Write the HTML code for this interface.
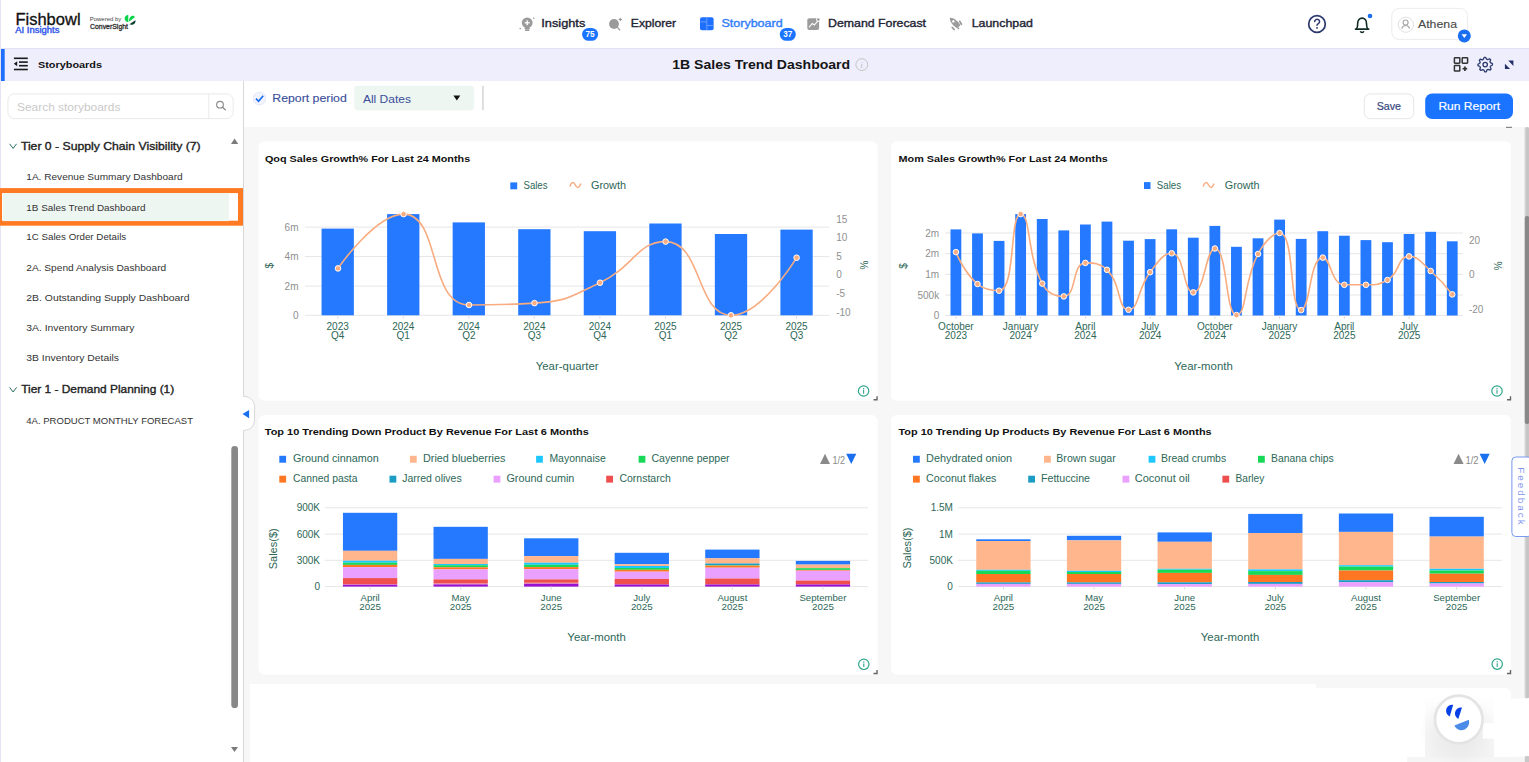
<!DOCTYPE html>
<html><head><meta charset="utf-8"><title>1B Sales Trend Dashboard</title>
<style>html,body{margin:0;padding:0;width:1529px;height:762px;overflow:hidden;background:#fff;font-family:"Liberation Sans",sans-serif}</style>
</head><body>
<svg width="1529" height="762" viewBox="0 0 1529 762" style="position:absolute;left:0;top:0;font-family:'Liberation Sans',sans-serif">
<rect x="0.00" y="0.00" width="1529.00" height="762.00" fill="#ffffff" rx="0"/>
<rect x="244.00" y="127.00" width="1285.00" height="635.00" fill="#f7f7f7" rx="0"/>
<rect x="0.00" y="0.00" width="1.00" height="762.00" fill="#e4e4f4" rx="0"/>
<rect x="0.00" y="48.00" width="1529.00" height="1.00" fill="#e2e2f6" rx="0"/>
<rect x="1.00" y="49.00" width="1528.00" height="32.00" fill="#eeeefc" rx="0"/>
<rect x="1.00" y="49.00" width="3.70" height="32.00" fill="#1f6fff" rx="0"/>
<rect x="243.00" y="81.00" width="1.00" height="681.00" fill="#d8d8d8" rx="0"/>
<text x="15.40" y="24.60" font-size="15.8" fill="#111111" color="#111111" textLength="65.20" lengthAdjust="spacingAndGlyphs" stroke="currentColor" stroke-width="0.3">Fishbowl</text>
<text x="15.30" y="32.60" font-size="8.9" fill="#3357ea" color="#3357ea" textLength="44.10" lengthAdjust="spacingAndGlyphs" stroke="currentColor" stroke-width="0.4">AI Insights</text>
<text x="89.70" y="20.80" font-size="5.6" fill="#444444" color="#444444" textLength="31.60" lengthAdjust="spacingAndGlyphs">Powered by</text>
<text x="90.00" y="29.10" font-size="7.6" fill="#333333" color="#333333" textLength="38.00" lengthAdjust="spacingAndGlyphs" stroke="currentColor" stroke-width="0.35">ConverSight</text>
<path d="M128.3,15.1 C123.4,15.2 123.4,22.1 128.3,22.3 Z" fill="#08d34a"/>
<path d="M128.9,21.7 L134.9,17.2 C133.6,14.6 129,15.6 128.9,21.7 Z" fill="#08d34a"/>
<path d="M129.4,24.3 L135.3,20.2 C136.4,23.6 132.4,25.8 129.4,24.3 Z" fill="#063f30"/>
<g fill="#9a9a9a"><circle cx="527.2" cy="22.8" r="5.4"/><rect x="524.6" y="27.2" width="5.2" height="2.6" rx="1"/><rect x="525" y="30" width="4.4" height="1" rx="0.5"/></g>
<g stroke="#fff" stroke-width="1.3"><line x1="527.2" y1="20.3" x2="527.2" y2="25.3"/><line x1="524.7" y1="22.8" x2="529.7" y2="22.8"/></g>
<g fill="#9a9a9a"><circle cx="533.8" cy="18.2" r="0.8"/><circle cx="520.2" cy="28.6" r="0.8"/></g>
<text x="541.30" y="27.10" font-size="10.6" fill="#1e2433" color="#1e2433" textLength="44.00" lengthAdjust="spacingAndGlyphs" stroke="currentColor" stroke-width="0.35">Insights</text>
<rect x="582.10" y="27.90" width="16.00" height="12.90" fill="#1a74ff" rx="6.45"/>
<text x="590.10" y="37.10" font-size="8.2" fill="#ffffff" color="#ffffff" font-weight="bold" text-anchor="middle">75</text>
<circle cx="614" cy="24" r="4.95" fill="#9a9a9a"/><line x1="617.4" y1="27.4" x2="619.7" y2="29.7" stroke="#9a9a9a" stroke-width="1.3" stroke-linecap="round"/>
<path d="M620.3,17.2 Q620.6,19.1 622.5,19.4 Q620.6,19.7 620.3,21.6 Q620,19.7 618.1,19.4 Q620,19.1 620.3,17.2 Z" fill="#9a9a9a"/>
<text x="630.80" y="27.10" font-size="10.6" fill="#1e2433" color="#1e2433" textLength="45.20" lengthAdjust="spacingAndGlyphs" stroke="currentColor" stroke-width="0.35">Explorer</text>
<rect x="700.00" y="17.30" width="13.60" height="13.00" fill="#1f6fff" rx="2"/>
<g stroke="#7fb0ff" stroke-width="0.7"><line x1="706.8" y1="17.5" x2="706.8" y2="30"/><line x1="700.2" y1="21.9" x2="706.8" y2="21.9"/><line x1="706.8" y1="25.5" x2="713.4" y2="25.5"/></g>
<text x="721.50" y="27.10" font-size="10.6" fill="#2f7cfa" color="#2f7cfa" textLength="61.10" lengthAdjust="spacingAndGlyphs" stroke="currentColor" stroke-width="0.35">Storyboard</text>
<rect x="779.80" y="27.90" width="16.00" height="12.90" fill="#1a74ff" rx="6.45"/>
<text x="787.80" y="37.10" font-size="8.2" fill="#ffffff" color="#ffffff" font-weight="bold" text-anchor="middle">37</text>
<rect x="807.30" y="18.30" width="11.80" height="11.70" fill="#9c9c9c" rx="2"/>
<polyline points="809.3,26.8 812.3,23.4 814.3,25 817.6,21.4" fill="none" stroke="#fff" stroke-width="1.1" stroke-linecap="round"/><circle cx="818.3" cy="19.5" r="2.3" fill="#fff"/><circle cx="818.3" cy="19.5" r="1.35" fill="#9c9c9c"/>
<text x="828.00" y="26.90" font-size="10.6" fill="#1e2433" color="#1e2433" textLength="98.00" lengthAdjust="spacingAndGlyphs" stroke="currentColor" stroke-width="0.35">Demand Forecast</text>
<g transform="translate(954.8,22.8) rotate(45)"><path d="M-7,0 C-4.5,-3.3 2.5,-3.3 5.6,-2.3 L5.6,2.3 C2.5,3.3 -4.5,3.3 -7,0 Z" fill="#9c9c9c"/><circle cx="-2" cy="0" r="1.3" fill="#fff"/></g>
<g stroke="#9c9c9c" stroke-width="1.8" stroke-linecap="round"><line x1="959.8" y1="21.4" x2="961.4" y2="24.2"/><line x1="952.3" y1="27.5" x2="954.1" y2="29.5"/></g><circle cx="958.5" cy="28.4" r="0.85" fill="#9c9c9c"/>
<text x="971.70" y="26.90" font-size="10.6" fill="#1e2433" color="#1e2433" textLength="61.30" lengthAdjust="spacingAndGlyphs" stroke="currentColor" stroke-width="0.35">Launchpad</text>
<circle cx="1317" cy="24" r="8.3" fill="none" stroke="#2d3a6e" stroke-width="1.75"/>
<path d="M1314.7,21.6 A2.45,2.3 0 1 1 1318.4,23.6 C1317.5,24.1 1317,24.5 1317,25.3" fill="none" stroke="#2d3a6e" stroke-width="1.5" stroke-linecap="round"/><rect x="1316.2" y="27.1" width="1.6" height="1.6" fill="#2d3a6e"/>
<path d="M1356.4,29 C1357.6,27.6 1357.7,26 1357.7,23.4 C1357.7,20.2 1359.6,18.1 1362.1,18.1 C1364.6,18.1 1366.5,20.2 1366.5,23.4 C1366.5,26 1366.6,27.6 1367.8,29" fill="none" stroke="#102a24" stroke-width="1.6"/><line x1="1355.5" y1="29.1" x2="1368.7" y2="29.1" stroke="#102a24" stroke-width="1.7" stroke-linecap="round"/><path d="M1360.4,31.2 A1.75,1.6 0 0 0 1363.8,31.2" fill="none" stroke="#102a24" stroke-width="1.5"/>
<circle cx="1370" cy="16" r="2.3" fill="#1a6ff0"/>
<rect x="1391.8" y="8.4" width="75.6" height="31" rx="7" fill="#fff" stroke="#ececec" stroke-width="1"/>
<circle cx="1405.9" cy="24.7" r="7.6" fill="#fff" stroke="#dddddd" stroke-width="0.9"/>
<circle cx="1405.6" cy="22.5" r="2.5" fill="none" stroke="#a8a8a8" stroke-width="1.2"/><path d="M1401.8,28.6 A4,4 0 0 1 1409.6,28.6" fill="none" stroke="#a8a8a8" stroke-width="1.2"/>
<text x="1418.00" y="27.90" font-size="10" fill="#4a4a4a" color="#4a4a4a" textLength="38.99" lengthAdjust="spacingAndGlyphs" stroke="currentColor" stroke-width="0.12">Athena</text>
<circle cx="1464.3" cy="35.9" r="6.5" fill="#1a6ff0"/><path d="M1461.6,34.3 L1467,34.3 L1464.3,37.9 Z" fill="#fff"/>
<g stroke="#1a1a1a" stroke-width="1.6"><line x1="13.9" y1="58.3" x2="27.8" y2="58.3"/><line x1="19" y1="62.1" x2="27.8" y2="62.1"/><line x1="19" y1="65.7" x2="27.8" y2="65.7"/><line x1="13.9" y1="69.5" x2="27.8" y2="69.5"/></g><path d="M13.8,63.8 L17.2,61.3 L17.2,66.3 Z" fill="#1a1a1a"/>
<text x="38.00" y="68.00" font-size="9.3" fill="#111111" color="#111111" font-weight="bold" textLength="64.00" lengthAdjust="spacingAndGlyphs">Storyboards</text>
<text x="672.20" y="68.70" font-size="12.4" fill="#151515" color="#151515" font-weight="bold" textLength="178.00" lengthAdjust="spacingAndGlyphs">1B Sales Trend Dashboard</text>
<circle cx="861.8" cy="64.6" r="5.9" fill="none" stroke="#c4c4c4" stroke-width="1"/><text x="861.6" y="67.8" font-size="8" fill="#b8b8b8" text-anchor="middle" font-style="italic" font-family="Liberation Serif">i</text>
<g fill="none" stroke="#333" stroke-width="1.5"><rect x="1454.4" y="57.8" width="5.4" height="5.4" rx="0.6"/><rect x="1462.2" y="57.8" width="5.4" height="5.4" rx="0.6"/><rect x="1454.4" y="65.6" width="5.4" height="5.4" rx="0.6"/></g><g stroke="#333" stroke-width="1.7" stroke-linecap="butt"><line x1="1464.9" y1="66.4" x2="1464.9" y2="71"/><line x1="1462.6" y1="68.7" x2="1467.2" y2="68.7"/></g>
<polygon points="1492.42,63.53 1492.49,64.96 1490.63,65.96 1490.26,66.99 1491.06,68.95 1490.10,70.01 1488.08,69.40 1487.09,69.87 1486.27,71.82 1484.84,71.89 1483.84,70.03 1482.81,69.66 1480.85,70.46 1479.79,69.50 1480.40,67.48 1479.93,66.49 1477.98,65.67 1477.91,64.24 1479.77,63.24 1480.14,62.21 1479.34,60.25 1480.30,59.19 1482.32,59.80 1483.31,59.33 1484.13,57.38 1485.56,57.31 1486.56,59.17 1487.59,59.54 1489.55,58.74 1490.61,59.70 1490.00,61.72 1490.47,62.71" fill="none" stroke="#2d3a6e" stroke-width="1.3" stroke-linejoin="round"/><circle cx="1485.2" cy="64.6" r="2.2" fill="none" stroke="#2d3a6e" stroke-width="1.3"/>
<path d="M1513.4,60.6 L1508.3,60.6 L1513.4,65.9 Z M1504.9,69.1 L1510.1,69.1 L1504.9,63.7 Z" fill="#24306a"/>
<rect x="7.9" y="93.9" width="225.3" height="24.7" rx="6.5" fill="#fff" stroke="#e6e6e6" stroke-width="0.9"/>
<rect x="208.40" y="94.20" width="0.90" height="24.10" fill="#e6e6e6" rx="0"/>
<circle cx="220" cy="104.7" r="3.35" fill="none" stroke="#8c8c8c" stroke-width="1.15"/><line x1="222.5" y1="107.2" x2="225.3" y2="109.8" stroke="#8c8c8c" stroke-width="1.3" stroke-linecap="round"/>
<text x="17.00" y="110.70" font-size="11.3" fill="#c9c9c9" color="#c9c9c9" textLength="103.40" lengthAdjust="spacingAndGlyphs">Search storyboards</text>
<polyline points="9.6,143.8 13.1,148.4 16.6,143.8" fill="none" stroke="#2f6a5c" stroke-width="1"/>
<text x="20.90" y="149.60" font-size="11" fill="#222222" color="#222222" textLength="179.80" lengthAdjust="spacingAndGlyphs" stroke="currentColor" stroke-width="0.35">Tier 0 - Supply Chain Visibility (7)</text>
<path d="M231,144 L238.2,144 L234.6,138.4 Z" fill="#7a7a7a"/>
<rect x="-0.5" y="190.6" width="241" height="32.6" fill="#ffffff" stroke="#ff7a22" stroke-width="5"/>
<rect x="2.90" y="193.10" width="226.00" height="28.00" fill="#eef6f2" rx="0"/>
<text x="26.30" y="180.10" font-size="9.9" fill="#333333" color="#333333" textLength="156.30" lengthAdjust="spacingAndGlyphs">1A. Revenue Summary Dashboard</text>
<text x="26.30" y="210.50" font-size="9.9" fill="#333333" color="#333333" textLength="119.20" lengthAdjust="spacingAndGlyphs">1B Sales Trend Dashboard</text>
<text x="26.30" y="240.20" font-size="9.9" fill="#333333" color="#333333" textLength="99.90" lengthAdjust="spacingAndGlyphs">1C Sales Order Details</text>
<text x="26.30" y="270.50" font-size="9.9" fill="#333333" color="#333333" textLength="139.90" lengthAdjust="spacingAndGlyphs">2A. Spend Analysis Dashboard</text>
<text x="26.30" y="300.80" font-size="9.9" fill="#333333" color="#333333" textLength="163.30" lengthAdjust="spacingAndGlyphs">2B. Outstanding Supply Dashboard</text>
<text x="26.30" y="331.00" font-size="9.9" fill="#333333" color="#333333" textLength="108.20" lengthAdjust="spacingAndGlyphs">3A. Inventory Summary</text>
<text x="26.30" y="360.80" font-size="9.9" fill="#333333" color="#333333" textLength="92.70" lengthAdjust="spacingAndGlyphs">3B Inventory Details</text>
<polyline points="9.6,387.4 13.1,392 16.6,387.4" fill="none" stroke="#2f6a5c" stroke-width="1"/>
<text x="21.20" y="393.30" font-size="11" fill="#222222" color="#222222" textLength="152.99" lengthAdjust="spacingAndGlyphs" stroke="currentColor" stroke-width="0.35">Tier 1 - Demand Planning (1)</text>
<text x="26.30" y="424.00" font-size="9.9" fill="#333333" color="#333333" textLength="166.70" lengthAdjust="spacingAndGlyphs">4A. PRODUCT MONTHLY FORECAST</text>
<rect x="231.30" y="446.10" width="6.70" height="262.00" fill="#888888" rx="3.35"/>
<path d="M231,747 L238,747 L234.5,752 Z" fill="#7a7a7a"/>
<rect x="253.4" y="92.4" width="12.2" height="12.3" rx="5.5" fill="#f2f3fd" stroke="#e2e5f8" stroke-width="0.9"/><polyline points="256,98.6 258.6,101.3 263.2,95.8" fill="none" stroke="#1a6ff0" stroke-width="1.7"/>
<text x="272.30" y="101.70" font-size="11" fill="#3b4f9a" color="#3b4f9a" textLength="74.50" lengthAdjust="spacingAndGlyphs" stroke="currentColor" stroke-width="0.12">Report period</text>
<rect x="354.20" y="85.80" width="120.00" height="24.80" fill="#eef6f2" rx="4"/>
<text x="362.90" y="102.60" font-size="11" fill="#3b4f9a" color="#3b4f9a" textLength="48.01" lengthAdjust="spacingAndGlyphs">All Dates</text>
<path d="M453.4,95.4 L460.3,95.4 L456.85,100.6 Z" fill="#111"/>
<rect x="482.30" y="85.80" width="1.30" height="24.30" fill="#cfcfcf" rx="0"/>
<rect x="1364.3" y="93.9" width="49.4" height="24.8" rx="6" fill="#fff" stroke="#e3e3e3" stroke-width="0.9"/>
<text x="1376.70" y="110.10" font-size="10" fill="#3a4a82" color="#3a4a82" textLength="24.30" lengthAdjust="spacingAndGlyphs" stroke="currentColor" stroke-width="0.2">Save</text>
<rect x="1425.20" y="93.50" width="87.80" height="25.50" fill="#1a74ff" rx="7"/>
<text x="1438.40" y="110.10" font-size="10" fill="#ffffff" color="#ffffff" textLength="61.60" lengthAdjust="spacingAndGlyphs" stroke="currentColor" stroke-width="0.15">Run Report</text>
<rect x="258.50" y="141.30" width="619.10" height="259.50" fill="#ffffff" rx="6"/>
<rect x="890.90" y="141.30" width="620.10" height="259.50" fill="#ffffff" rx="6"/>
<rect x="258.50" y="415.00" width="619.10" height="259.50" fill="#ffffff" rx="6"/>
<rect x="890.90" y="415.00" width="620.10" height="259.50" fill="#ffffff" rx="6"/>
<rect x="250.00" y="684.00" width="1066.00" height="78.00" fill="#ffffff" rx="0"/>
<rect x="258.50" y="688.00" width="1252.50" height="112.00" fill="#ffffff" rx="6"/>
<rect x="1506.00" y="126.80" width="6.00" height="1.10" fill="#7a7a7a" rx="0"/>
<path d="M873.5,399.8 L877,399.8 L877,396.3" fill="none" stroke="#666" stroke-width="1.4"/>
<path d="M1507.0,399.8 L1510.5,399.8 L1510.5,396.3" fill="none" stroke="#666" stroke-width="1.4"/>
<path d="M873.5,673.5 L877,673.5 L877,670.0" fill="none" stroke="#666" stroke-width="1.4"/>
<path d="M1507.0,673.5 L1510.5,673.5 L1510.5,670.0" fill="none" stroke="#666" stroke-width="1.4"/>
<circle cx="863.6" cy="391" r="5.2" fill="none" stroke="#2ea58b" stroke-width="1.2"/><circle cx="863.6" cy="388.7" r="0.7" fill="#2ea58b"/><line x1="863.6" y1="390.1" x2="863.6" y2="393.8" stroke="#2ea58b" stroke-width="1.1"/>
<circle cx="1497" cy="391" r="5.2" fill="none" stroke="#2ea58b" stroke-width="1.2"/><circle cx="1497" cy="388.7" r="0.7" fill="#2ea58b"/><line x1="1497" y1="390.1" x2="1497" y2="393.8" stroke="#2ea58b" stroke-width="1.1"/>
<circle cx="863.8" cy="664.3" r="5.2" fill="none" stroke="#2ea58b" stroke-width="1.2"/><circle cx="863.8" cy="662.0" r="0.7" fill="#2ea58b"/><line x1="863.8" y1="663.4" x2="863.8" y2="667.0999999999999" stroke="#2ea58b" stroke-width="1.1"/>
<circle cx="1497.2" cy="664.1" r="5.2" fill="none" stroke="#2ea58b" stroke-width="1.2"/><circle cx="1497.2" cy="661.8000000000001" r="0.7" fill="#2ea58b"/><line x1="1497.2" y1="663.2" x2="1497.2" y2="666.9" stroke="#2ea58b" stroke-width="1.1"/>
<text x="264.90" y="161.70" font-size="9.8" fill="#111111" color="#111111" font-weight="bold" textLength="205.29" lengthAdjust="spacingAndGlyphs">Qoq Sales Growth% For Last 24 Months</text>
<rect x="510.30" y="182.40" width="6.90" height="6.90" fill="#2479ff" rx="0"/>
<text x="523.50" y="188.80" font-size="10.5" fill="#2d6757" color="#2d6757" textLength="24.00" lengthAdjust="spacingAndGlyphs">Sales</text>
<path d="M569.8,186.6 C571.5,181.5 573.6,181.5 575.3,185 C577,188.5 579,188.5 580.8,183.5" fill="none" stroke="#f8ac80" stroke-width="1.4"/>
<text x="591.00" y="188.80" font-size="10.5" fill="#2d6757" color="#2d6757" textLength="35.00" lengthAdjust="spacingAndGlyphs">Growth</text>
<rect x="304.90" y="226.60" width="524.40" height="1.00" fill="#e6e6e6" rx="0"/>
<rect x="304.90" y="256.10" width="524.40" height="1.00" fill="#e6e6e6" rx="0"/>
<rect x="304.90" y="285.60" width="524.40" height="1.00" fill="#e6e6e6" rx="0"/>
<rect x="304.90" y="314.80" width="524.40" height="1.00" fill="#e6e6e6" rx="0"/>
<text x="298.50" y="230.60" font-size="10" fill="#8f8f8f" color="#8f8f8f" text-anchor="end">6m</text>
<text x="298.50" y="260.10" font-size="10" fill="#8f8f8f" color="#8f8f8f" text-anchor="end">4m</text>
<text x="298.50" y="289.60" font-size="10" fill="#8f8f8f" color="#8f8f8f" text-anchor="end">2m</text>
<text x="298.50" y="318.80" font-size="10" fill="#8f8f8f" color="#8f8f8f" text-anchor="end">0</text>
<text transform="translate(269.70,265.70) rotate(-90)" x="0" y="0" font-size="10" fill="#2d6757" text-anchor="middle" dominant-baseline="central">$</text>
<text x="836.20" y="222.60" font-size="10" fill="#8f8f8f" color="#8f8f8f" text-anchor="start">15</text>
<text x="836.20" y="241.10" font-size="10" fill="#8f8f8f" color="#8f8f8f" text-anchor="start">10</text>
<text x="836.20" y="259.50" font-size="10" fill="#8f8f8f" color="#8f8f8f" text-anchor="start">5</text>
<text x="836.20" y="277.70" font-size="10" fill="#8f8f8f" color="#8f8f8f" text-anchor="start">0</text>
<text x="836.20" y="296.80" font-size="10" fill="#8f8f8f" color="#8f8f8f" text-anchor="start">-5</text>
<text x="836.20" y="315.50" font-size="10" fill="#8f8f8f" color="#8f8f8f" text-anchor="start">-10</text>
<text transform="translate(864.50,265.00) rotate(-90)" x="0" y="0" font-size="10" fill="#2d6757" text-anchor="middle" dominant-baseline="central">%</text>
<rect x="321.55" y="228.60" width="32.30" height="86.70" fill="#2479ff" rx="0"/>
<rect x="337.20" y="315.30" width="1.00" height="3.40" fill="#dddddd" rx="0"/>
<text x="337.70" y="329.70" font-size="10" fill="#2d6757" color="#2d6757" text-anchor="middle">2023</text>
<text x="337.70" y="338.80" font-size="10" fill="#2d6757" color="#2d6757" text-anchor="middle">Q4</text>
<rect x="387.10" y="214.10" width="32.30" height="101.20" fill="#2479ff" rx="0"/>
<rect x="402.75" y="315.30" width="1.00" height="3.40" fill="#dddddd" rx="0"/>
<text x="403.25" y="329.70" font-size="10" fill="#2d6757" color="#2d6757" text-anchor="middle">2024</text>
<text x="403.25" y="338.80" font-size="10" fill="#2d6757" color="#2d6757" text-anchor="middle">Q1</text>
<rect x="452.65" y="222.40" width="32.30" height="92.90" fill="#2479ff" rx="0"/>
<rect x="468.30" y="315.30" width="1.00" height="3.40" fill="#dddddd" rx="0"/>
<text x="468.80" y="329.70" font-size="10" fill="#2d6757" color="#2d6757" text-anchor="middle">2024</text>
<text x="468.80" y="338.80" font-size="10" fill="#2d6757" color="#2d6757" text-anchor="middle">Q2</text>
<rect x="518.20" y="229.20" width="32.30" height="86.10" fill="#2479ff" rx="0"/>
<rect x="533.85" y="315.30" width="1.00" height="3.40" fill="#dddddd" rx="0"/>
<text x="534.35" y="329.70" font-size="10" fill="#2d6757" color="#2d6757" text-anchor="middle">2024</text>
<text x="534.35" y="338.80" font-size="10" fill="#2d6757" color="#2d6757" text-anchor="middle">Q3</text>
<rect x="583.75" y="231.20" width="32.30" height="84.10" fill="#2479ff" rx="0"/>
<rect x="599.40" y="315.30" width="1.00" height="3.40" fill="#dddddd" rx="0"/>
<text x="599.90" y="329.70" font-size="10" fill="#2d6757" color="#2d6757" text-anchor="middle">2024</text>
<text x="599.90" y="338.80" font-size="10" fill="#2d6757" color="#2d6757" text-anchor="middle">Q4</text>
<rect x="649.30" y="223.50" width="32.30" height="91.80" fill="#2479ff" rx="0"/>
<rect x="664.95" y="315.30" width="1.00" height="3.40" fill="#dddddd" rx="0"/>
<text x="665.45" y="329.70" font-size="10" fill="#2d6757" color="#2d6757" text-anchor="middle">2025</text>
<text x="665.45" y="338.80" font-size="10" fill="#2d6757" color="#2d6757" text-anchor="middle">Q1</text>
<rect x="714.85" y="234.00" width="32.30" height="81.30" fill="#2479ff" rx="0"/>
<rect x="730.50" y="315.30" width="1.00" height="3.40" fill="#dddddd" rx="0"/>
<text x="731.00" y="329.70" font-size="10" fill="#2d6757" color="#2d6757" text-anchor="middle">2025</text>
<text x="731.00" y="338.80" font-size="10" fill="#2d6757" color="#2d6757" text-anchor="middle">Q2</text>
<rect x="780.40" y="229.60" width="32.30" height="85.70" fill="#2479ff" rx="0"/>
<rect x="796.05" y="315.30" width="1.00" height="3.40" fill="#dddddd" rx="0"/>
<text x="796.55" y="329.70" font-size="10" fill="#2d6757" color="#2d6757" text-anchor="middle">2025</text>
<text x="796.55" y="338.80" font-size="10" fill="#2d6757" color="#2d6757" text-anchor="middle">Q3</text>
<path d="M338.00,268.40 C338.00,268.40 375.31,214.10 403.60,214.10 C440.81,214.10 427.71,305.00 469.00,305.00 C493.16,305.00 502.50,305.00 534.50,303.10 C568.00,301.11 569.20,297.15 600.00,282.70 C634.75,266.40 636.78,241.60 665.60,241.60 C702.28,241.60 696.27,315.30 731.00,315.30 C761.77,315.30 796.60,257.70 796.60,257.70" fill="none" stroke="#f8ac80" stroke-width="1.6"/>
<circle cx="338" cy="268.4" r="2.8" fill="#f8ac80" stroke="#fff" stroke-width="1"/>
<circle cx="403.6" cy="214.1" r="2.8" fill="#f8ac80" stroke="#fff" stroke-width="1"/>
<circle cx="469" cy="305" r="2.8" fill="#f8ac80" stroke="#fff" stroke-width="1"/>
<circle cx="534.5" cy="303.1" r="2.8" fill="#f8ac80" stroke="#fff" stroke-width="1"/>
<circle cx="600" cy="282.7" r="2.8" fill="#f8ac80" stroke="#fff" stroke-width="1"/>
<circle cx="665.6" cy="241.6" r="2.8" fill="#f8ac80" stroke="#fff" stroke-width="1"/>
<circle cx="731" cy="315.3" r="2.8" fill="#f8ac80" stroke="#fff" stroke-width="1"/>
<circle cx="796.6" cy="257.7" r="2.8" fill="#f8ac80" stroke="#fff" stroke-width="1"/>
<text x="567.20" y="369.50" font-size="11.4" fill="#2d6757" color="#2d6757" text-anchor="middle">Year-quarter</text>
<text x="898.50" y="161.50" font-size="9.8" fill="#111111" color="#111111" font-weight="bold" textLength="209.30" lengthAdjust="spacingAndGlyphs">Mom Sales Growth% For Last 24 Months</text>
<rect x="1144.00" y="182.10" width="6.50" height="6.90" fill="#2479ff" rx="0"/>
<text x="1156.80" y="188.80" font-size="10.5" fill="#2d6757" color="#2d6757" textLength="24.20" lengthAdjust="spacingAndGlyphs">Sales</text>
<path d="M1203.1,186.6 C1204.8,181.5 1206.9,181.5 1208.6,185 C1210.3,188.5 1212.3,188.5 1214.1,183.5" fill="none" stroke="#f8ac80" stroke-width="1.4"/>
<text x="1224.80" y="188.80" font-size="10.5" fill="#2d6757" color="#2d6757" textLength="34.80" lengthAdjust="spacingAndGlyphs">Growth</text>
<rect x="945.10" y="232.50" width="517.90" height="1.00" fill="#e6e6e6" rx="0"/>
<rect x="945.10" y="253.20" width="517.90" height="1.00" fill="#e6e6e6" rx="0"/>
<rect x="945.10" y="273.80" width="517.90" height="1.00" fill="#e6e6e6" rx="0"/>
<rect x="945.10" y="294.50" width="517.90" height="1.00" fill="#e6e6e6" rx="0"/>
<rect x="945.10" y="315.00" width="517.90" height="1.00" fill="#e6e6e6" rx="0"/>
<text x="939.20" y="236.50" font-size="10" fill="#8f8f8f" color="#8f8f8f" text-anchor="end">2m</text>
<text x="939.20" y="257.20" font-size="10" fill="#8f8f8f" color="#8f8f8f" text-anchor="end">2m</text>
<text x="939.20" y="277.80" font-size="10" fill="#8f8f8f" color="#8f8f8f" text-anchor="end">1m</text>
<text x="939.20" y="298.50" font-size="10" fill="#8f8f8f" color="#8f8f8f" text-anchor="end">500k</text>
<text x="939.20" y="319.00" font-size="10" fill="#8f8f8f" color="#8f8f8f" text-anchor="end">0</text>
<text transform="translate(903.30,265.90) rotate(-90)" x="0" y="0" font-size="10" fill="#2d6757" text-anchor="middle" dominant-baseline="central">$</text>
<text x="1468.90" y="244.20" font-size="10" fill="#8f8f8f" color="#8f8f8f" text-anchor="start">20</text>
<text x="1468.90" y="278.20" font-size="10" fill="#8f8f8f" color="#8f8f8f" text-anchor="start">0</text>
<text x="1468.90" y="312.70" font-size="10" fill="#8f8f8f" color="#8f8f8f" text-anchor="start">-20</text>
<text transform="translate(1498.00,265.90) rotate(-90)" x="0" y="0" font-size="10" fill="#2d6757" text-anchor="middle" dominant-baseline="central">%</text>
<rect x="950.50" y="229.40" width="10.80" height="86.10" fill="#2479ff" rx="0"/>
<rect x="955.40" y="315.50" width="1.00" height="3.40" fill="#dddddd" rx="0"/>
<text x="955.90" y="330.00" font-size="10" fill="#2d6757" color="#2d6757" text-anchor="middle">October</text>
<text x="955.90" y="339.20" font-size="10" fill="#2d6757" color="#2d6757" text-anchor="middle">2023</text>
<rect x="972.08" y="233.40" width="10.80" height="82.10" fill="#2479ff" rx="0"/>
<rect x="993.66" y="240.90" width="10.80" height="74.60" fill="#2479ff" rx="0"/>
<rect x="1015.24" y="214.10" width="10.80" height="101.40" fill="#2479ff" rx="0"/>
<rect x="1020.14" y="315.50" width="1.00" height="3.40" fill="#dddddd" rx="0"/>
<text x="1020.64" y="330.00" font-size="10" fill="#2d6757" color="#2d6757" text-anchor="middle">January</text>
<text x="1020.64" y="339.20" font-size="10" fill="#2d6757" color="#2d6757" text-anchor="middle">2024</text>
<rect x="1036.82" y="219.00" width="10.80" height="96.50" fill="#2479ff" rx="0"/>
<rect x="1058.40" y="230.40" width="10.80" height="85.10" fill="#2479ff" rx="0"/>
<rect x="1079.98" y="224.50" width="10.80" height="91.00" fill="#2479ff" rx="0"/>
<rect x="1084.88" y="315.50" width="1.00" height="3.40" fill="#dddddd" rx="0"/>
<text x="1085.38" y="330.00" font-size="10" fill="#2d6757" color="#2d6757" text-anchor="middle">April</text>
<text x="1085.38" y="339.20" font-size="10" fill="#2d6757" color="#2d6757" text-anchor="middle">2024</text>
<rect x="1101.56" y="221.60" width="10.80" height="93.90" fill="#2479ff" rx="0"/>
<rect x="1123.14" y="240.70" width="10.80" height="74.80" fill="#2479ff" rx="0"/>
<rect x="1144.72" y="239.10" width="10.80" height="76.40" fill="#2479ff" rx="0"/>
<rect x="1149.62" y="315.50" width="1.00" height="3.40" fill="#dddddd" rx="0"/>
<text x="1150.12" y="330.00" font-size="10" fill="#2d6757" color="#2d6757" text-anchor="middle">July</text>
<text x="1150.12" y="339.20" font-size="10" fill="#2d6757" color="#2d6757" text-anchor="middle">2024</text>
<rect x="1166.30" y="229.30" width="10.80" height="86.20" fill="#2479ff" rx="0"/>
<rect x="1187.88" y="237.70" width="10.80" height="77.80" fill="#2479ff" rx="0"/>
<rect x="1209.46" y="225.90" width="10.80" height="89.60" fill="#2479ff" rx="0"/>
<rect x="1214.36" y="315.50" width="1.00" height="3.40" fill="#dddddd" rx="0"/>
<text x="1214.86" y="330.00" font-size="10" fill="#2d6757" color="#2d6757" text-anchor="middle">October</text>
<text x="1214.86" y="339.20" font-size="10" fill="#2d6757" color="#2d6757" text-anchor="middle">2024</text>
<rect x="1231.04" y="246.80" width="10.80" height="68.70" fill="#2479ff" rx="0"/>
<rect x="1252.62" y="238.30" width="10.80" height="77.20" fill="#2479ff" rx="0"/>
<rect x="1274.20" y="219.60" width="10.80" height="95.90" fill="#2479ff" rx="0"/>
<rect x="1279.10" y="315.50" width="1.00" height="3.40" fill="#dddddd" rx="0"/>
<text x="1279.60" y="330.00" font-size="10" fill="#2d6757" color="#2d6757" text-anchor="middle">January</text>
<text x="1279.60" y="339.20" font-size="10" fill="#2d6757" color="#2d6757" text-anchor="middle">2025</text>
<rect x="1295.78" y="238.90" width="10.80" height="76.60" fill="#2479ff" rx="0"/>
<rect x="1317.36" y="231.20" width="10.80" height="84.30" fill="#2479ff" rx="0"/>
<rect x="1338.94" y="235.70" width="10.80" height="79.80" fill="#2479ff" rx="0"/>
<rect x="1343.84" y="315.50" width="1.00" height="3.40" fill="#dddddd" rx="0"/>
<text x="1344.34" y="330.00" font-size="10" fill="#2d6757" color="#2d6757" text-anchor="middle">April</text>
<text x="1344.34" y="339.20" font-size="10" fill="#2d6757" color="#2d6757" text-anchor="middle">2025</text>
<rect x="1360.52" y="240.10" width="10.80" height="75.40" fill="#2479ff" rx="0"/>
<rect x="1382.10" y="242.20" width="10.80" height="73.30" fill="#2479ff" rx="0"/>
<rect x="1403.68" y="234.00" width="10.80" height="81.50" fill="#2479ff" rx="0"/>
<rect x="1408.58" y="315.50" width="1.00" height="3.40" fill="#dddddd" rx="0"/>
<text x="1409.08" y="330.00" font-size="10" fill="#2d6757" color="#2d6757" text-anchor="middle">July</text>
<text x="1409.08" y="339.20" font-size="10" fill="#2d6757" color="#2d6757" text-anchor="middle">2025</text>
<rect x="1425.26" y="231.80" width="10.80" height="83.70" fill="#2479ff" rx="0"/>
<rect x="1446.84" y="241.30" width="10.80" height="74.20" fill="#2479ff" rx="0"/>
<path d="M955.90,252.10 C955.90,252.10 963.88,272.58 977.48,284.00 C985.46,290.70 994.29,290.70 999.06,290.70 C1015.87,290.70 1009.37,214.10 1020.64,214.10 C1030.95,214.10 1026.17,253.00 1042.22,283.60 C1047.75,294.15 1055.46,296.40 1063.80,296.40 C1077.04,296.40 1071.62,262.90 1085.38,262.90 C1093.20,262.90 1099.78,262.90 1106.96,269.80 C1121.36,283.64 1117.50,309.80 1128.54,309.80 C1139.08,309.80 1137.13,289.20 1150.12,272.20 C1158.71,260.95 1163.26,253.30 1171.70,253.30 C1184.84,253.30 1182.98,292.40 1193.28,292.40 C1204.56,292.40 1205.98,248.50 1214.86,248.50 C1227.56,248.50 1225.23,315.10 1236.44,315.10 C1246.81,315.10 1243.29,282.03 1258.02,254.00 C1264.87,240.98 1273.70,233.00 1279.60,233.00 C1295.28,233.00 1288.55,310.10 1301.18,310.10 C1310.13,310.10 1309.37,257.60 1322.76,257.60 C1330.95,257.60 1331.03,284.80 1344.34,284.80 C1352.61,284.80 1355.26,284.80 1365.92,284.80 C1376.84,284.80 1378.68,284.80 1387.50,280.00 C1400.26,273.06 1397.19,256.40 1409.08,256.40 C1418.77,256.40 1420.95,262.45 1430.66,271.00 C1442.53,281.45 1452.24,294.40 1452.24,294.40" fill="none" stroke="#f8ac80" stroke-width="1.6"/>
<circle cx="955.90" cy="252.1" r="2.8" fill="#f8ac80" stroke="#fff" stroke-width="1"/>
<circle cx="977.48" cy="284" r="2.8" fill="#f8ac80" stroke="#fff" stroke-width="1"/>
<circle cx="999.06" cy="290.7" r="2.8" fill="#f8ac80" stroke="#fff" stroke-width="1"/>
<circle cx="1020.64" cy="214.1" r="2.8" fill="#f8ac80" stroke="#fff" stroke-width="1"/>
<circle cx="1042.22" cy="283.6" r="2.8" fill="#f8ac80" stroke="#fff" stroke-width="1"/>
<circle cx="1063.80" cy="296.4" r="2.8" fill="#f8ac80" stroke="#fff" stroke-width="1"/>
<circle cx="1085.38" cy="262.9" r="2.8" fill="#f8ac80" stroke="#fff" stroke-width="1"/>
<circle cx="1106.96" cy="269.8" r="2.8" fill="#f8ac80" stroke="#fff" stroke-width="1"/>
<circle cx="1128.54" cy="309.8" r="2.8" fill="#f8ac80" stroke="#fff" stroke-width="1"/>
<circle cx="1150.12" cy="272.2" r="2.8" fill="#f8ac80" stroke="#fff" stroke-width="1"/>
<circle cx="1171.70" cy="253.3" r="2.8" fill="#f8ac80" stroke="#fff" stroke-width="1"/>
<circle cx="1193.28" cy="292.4" r="2.8" fill="#f8ac80" stroke="#fff" stroke-width="1"/>
<circle cx="1214.86" cy="248.5" r="2.8" fill="#f8ac80" stroke="#fff" stroke-width="1"/>
<circle cx="1236.44" cy="315.1" r="2.8" fill="#f8ac80" stroke="#fff" stroke-width="1"/>
<circle cx="1258.02" cy="254" r="2.8" fill="#f8ac80" stroke="#fff" stroke-width="1"/>
<circle cx="1279.60" cy="233" r="2.8" fill="#f8ac80" stroke="#fff" stroke-width="1"/>
<circle cx="1301.18" cy="310.1" r="2.8" fill="#f8ac80" stroke="#fff" stroke-width="1"/>
<circle cx="1322.76" cy="257.6" r="2.8" fill="#f8ac80" stroke="#fff" stroke-width="1"/>
<circle cx="1344.34" cy="284.8" r="2.8" fill="#f8ac80" stroke="#fff" stroke-width="1"/>
<circle cx="1365.92" cy="284.8" r="2.8" fill="#f8ac80" stroke="#fff" stroke-width="1"/>
<circle cx="1387.50" cy="280" r="2.8" fill="#f8ac80" stroke="#fff" stroke-width="1"/>
<circle cx="1409.08" cy="256.4" r="2.8" fill="#f8ac80" stroke="#fff" stroke-width="1"/>
<circle cx="1430.66" cy="271" r="2.8" fill="#f8ac80" stroke="#fff" stroke-width="1"/>
<circle cx="1452.24" cy="294.4" r="2.8" fill="#f8ac80" stroke="#fff" stroke-width="1"/>
<text x="1203.50" y="369.50" font-size="11.4" fill="#2d6757" color="#2d6757" text-anchor="middle">Year-month</text>
<text x="264.80" y="434.90" font-size="9.8" fill="#111111" color="#111111" font-weight="bold" textLength="324.10" lengthAdjust="spacingAndGlyphs">Top 10 Trending Down Product By Revenue For Last 6 Months</text>
<rect x="279.30" y="455.80" width="6.80" height="6.90" fill="#2479ff" rx="0"/>
<text x="292.90" y="462.00" font-size="10.3" fill="#2d6757" color="#2d6757" textLength="85.80" lengthAdjust="spacingAndGlyphs">Ground cinnamon</text>
<rect x="409.90" y="455.80" width="6.80" height="6.90" fill="#ffb68c" rx="0"/>
<text x="423.00" y="462.00" font-size="10.3" fill="#2d6757" color="#2d6757" textLength="82.40" lengthAdjust="spacingAndGlyphs">Dried blueberries</text>
<rect x="536.10" y="455.80" width="6.80" height="6.90" fill="#1ec8ff" rx="0"/>
<text x="549.40" y="462.00" font-size="10.3" fill="#2d6757" color="#2d6757" textLength="56.40" lengthAdjust="spacingAndGlyphs">Mayonnaise</text>
<rect x="638.60" y="455.80" width="6.80" height="6.90" fill="#17d957" rx="0"/>
<text x="651.40" y="462.00" font-size="10.3" fill="#2d6757" color="#2d6757" textLength="78.20" lengthAdjust="spacingAndGlyphs">Cayenne pepper</text>
<rect x="279.30" y="475.70" width="6.80" height="6.90" fill="#ff7722" rx="0"/>
<text x="293.00" y="481.90" font-size="10.3" fill="#2d6757" color="#2d6757" textLength="64.49" lengthAdjust="spacingAndGlyphs">Canned pasta</text>
<rect x="389.50" y="475.70" width="6.80" height="6.90" fill="#1a9cc4" rx="0"/>
<text x="402.20" y="481.90" font-size="10.3" fill="#2d6757" color="#2d6757" textLength="59.50" lengthAdjust="spacingAndGlyphs">Jarred olives</text>
<rect x="493.60" y="475.70" width="6.80" height="6.90" fill="#eaa0ff" rx="0"/>
<text x="506.40" y="481.90" font-size="10.3" fill="#2d6757" color="#2d6757" textLength="68.00" lengthAdjust="spacingAndGlyphs">Ground cumin</text>
<rect x="606.20" y="475.70" width="6.80" height="6.90" fill="#ef4e4e" rx="0"/>
<text x="619.40" y="481.90" font-size="10.3" fill="#2d6757" color="#2d6757" textLength="51.40" lengthAdjust="spacingAndGlyphs">Cornstarch</text>
<path d="M820,464.1 L830,464.1 L825,453.8 Z" fill="#8a8a8a"/>
<text x="832.40" y="463.60" font-size="10" fill="#8a8a8a" color="#8a8a8a" textLength="12.60" lengthAdjust="spacingAndGlyphs">1/2</text>
<path d="M846.2,453.8 L856.3,453.8 L851.25,464.1 Z" fill="#1a6ff0"/>
<rect x="324.80" y="507.30" width="543.40" height="1.00" fill="#e6e6e6" rx="0"/>
<rect x="324.80" y="533.60" width="543.40" height="1.00" fill="#e6e6e6" rx="0"/>
<rect x="324.80" y="559.80" width="543.40" height="1.00" fill="#e6e6e6" rx="0"/>
<rect x="324.80" y="586.10" width="543.40" height="1.00" fill="#e6e6e6" rx="0"/>
<text x="320.00" y="511.30" font-size="10" fill="#2d6757" color="#2d6757" text-anchor="end">900K</text>
<text x="320.00" y="537.60" font-size="10" fill="#2d6757" color="#2d6757" text-anchor="end">600K</text>
<text x="320.00" y="563.80" font-size="10" fill="#2d6757" color="#2d6757" text-anchor="end">300K</text>
<text x="320.00" y="590.10" font-size="10" fill="#2d6757" color="#2d6757" text-anchor="end">0</text>
<text transform="translate(272.70,548.80) rotate(-90)" x="0" y="0" font-size="11" fill="#2d6757" text-anchor="middle" dominant-baseline="central">Sales($)</text>
<rect x="342.95" y="512.80" width="54.30" height="38.00" fill="#2479ff" rx="0"/>
<rect x="342.95" y="550.80" width="54.30" height="9.90" fill="#ffb68c" rx="0"/>
<rect x="342.95" y="560.70" width="54.30" height="2.00" fill="#1ec8ff" rx="0"/>
<rect x="342.95" y="562.70" width="54.30" height="2.20" fill="#17d957" rx="0"/>
<rect x="342.95" y="564.90" width="54.30" height="2.20" fill="#ff7722" rx="0"/>
<rect x="342.95" y="567.10" width="54.30" height="11.00" fill="#eaa0ff" rx="0"/>
<rect x="342.95" y="578.10" width="54.30" height="6.30" fill="#ef4e4e" rx="0"/>
<rect x="342.95" y="584.40" width="54.30" height="0.30" fill="#f08aa0" rx="0"/>
<rect x="342.95" y="584.70" width="54.30" height="1.90" fill="#9810d0" rx="0"/>
<rect x="369.60" y="586.60" width="1.00" height="3.00" fill="#dddddd" rx="0"/>
<text x="370.10" y="600.50" font-size="9.6" fill="#2d6757" color="#2d6757" text-anchor="middle">April</text>
<text x="370.10" y="609.90" font-size="9.8" fill="#2d6757" color="#2d6757" text-anchor="middle">2025</text>
<rect x="433.52" y="526.80" width="54.30" height="32.10" fill="#2479ff" rx="0"/>
<rect x="433.52" y="558.90" width="54.30" height="5.10" fill="#ffb68c" rx="0"/>
<rect x="433.52" y="564.00" width="54.30" height="1.20" fill="#1ec8ff" rx="0"/>
<rect x="433.52" y="565.20" width="54.30" height="2.10" fill="#17d957" rx="0"/>
<rect x="433.52" y="567.30" width="54.30" height="2.10" fill="#ff7722" rx="0"/>
<rect x="433.52" y="569.40" width="54.30" height="10.00" fill="#eaa0ff" rx="0"/>
<rect x="433.52" y="579.40" width="54.30" height="3.60" fill="#ef4e4e" rx="0"/>
<rect x="433.52" y="583.00" width="54.30" height="1.40" fill="#f08aa0" rx="0"/>
<rect x="433.52" y="584.40" width="54.30" height="2.20" fill="#9810d0" rx="0"/>
<rect x="460.17" y="586.60" width="1.00" height="3.00" fill="#dddddd" rx="0"/>
<text x="460.67" y="600.50" font-size="9.6" fill="#2d6757" color="#2d6757" text-anchor="middle">May</text>
<text x="460.67" y="609.90" font-size="9.8" fill="#2d6757" color="#2d6757" text-anchor="middle">2025</text>
<rect x="524.09" y="538.30" width="54.30" height="17.80" fill="#2479ff" rx="0"/>
<rect x="524.09" y="556.10" width="54.30" height="6.60" fill="#ffb68c" rx="0"/>
<rect x="524.09" y="562.70" width="54.30" height="2.10" fill="#1ec8ff" rx="0"/>
<rect x="524.09" y="564.80" width="54.30" height="2.30" fill="#17d957" rx="0"/>
<rect x="524.09" y="567.10" width="54.30" height="2.10" fill="#ff7722" rx="0"/>
<rect x="524.09" y="569.20" width="54.30" height="10.20" fill="#eaa0ff" rx="0"/>
<rect x="524.09" y="579.40" width="54.30" height="3.40" fill="#ef4e4e" rx="0"/>
<rect x="524.09" y="582.80" width="54.30" height="1.00" fill="#f08aa0" rx="0"/>
<rect x="524.09" y="583.80" width="54.30" height="2.80" fill="#9810d0" rx="0"/>
<rect x="550.74" y="586.60" width="1.00" height="3.00" fill="#dddddd" rx="0"/>
<text x="551.24" y="600.50" font-size="9.6" fill="#2d6757" color="#2d6757" text-anchor="middle">June</text>
<text x="551.24" y="609.90" font-size="9.8" fill="#2d6757" color="#2d6757" text-anchor="middle">2025</text>
<rect x="614.66" y="552.80" width="54.30" height="11.50" fill="#2479ff" rx="0"/>
<rect x="614.66" y="564.30" width="54.30" height="1.70" fill="#ffb68c" rx="0"/>
<rect x="614.66" y="566.00" width="54.30" height="2.00" fill="#1ec8ff" rx="0"/>
<rect x="614.66" y="568.00" width="54.30" height="1.80" fill="#17d957" rx="0"/>
<rect x="614.66" y="569.80" width="54.30" height="1.90" fill="#ff7722" rx="0"/>
<rect x="614.66" y="571.70" width="54.30" height="7.20" fill="#eaa0ff" rx="0"/>
<rect x="614.66" y="578.90" width="54.30" height="5.60" fill="#ef4e4e" rx="0"/>
<rect x="614.66" y="584.50" width="54.30" height="2.10" fill="#9810d0" rx="0"/>
<rect x="641.31" y="586.60" width="1.00" height="3.00" fill="#dddddd" rx="0"/>
<text x="641.81" y="600.50" font-size="9.6" fill="#2d6757" color="#2d6757" text-anchor="middle">July</text>
<text x="641.81" y="609.90" font-size="9.8" fill="#2d6757" color="#2d6757" text-anchor="middle">2025</text>
<rect x="705.23" y="549.60" width="54.30" height="8.70" fill="#2479ff" rx="0"/>
<rect x="705.23" y="558.30" width="54.30" height="5.20" fill="#ffb68c" rx="0"/>
<rect x="705.23" y="563.50" width="54.30" height="1.60" fill="#1a9cc4" rx="0"/>
<rect x="705.23" y="565.10" width="54.30" height="0.50" fill="#17d957" rx="0"/>
<rect x="705.23" y="565.60" width="54.30" height="2.10" fill="#ff7722" rx="0"/>
<rect x="705.23" y="567.70" width="54.30" height="10.80" fill="#eaa0ff" rx="0"/>
<rect x="705.23" y="578.50" width="54.30" height="6.00" fill="#ef4e4e" rx="0"/>
<rect x="705.23" y="584.50" width="54.30" height="2.10" fill="#9810d0" rx="0"/>
<rect x="731.88" y="586.60" width="1.00" height="3.00" fill="#dddddd" rx="0"/>
<text x="732.38" y="600.50" font-size="9.6" fill="#2d6757" color="#2d6757" text-anchor="middle">August</text>
<text x="732.38" y="609.90" font-size="9.8" fill="#2d6757" color="#2d6757" text-anchor="middle">2025</text>
<rect x="795.80" y="560.90" width="54.30" height="3.70" fill="#2479ff" rx="0"/>
<rect x="795.80" y="564.60" width="54.30" height="3.60" fill="#ffb68c" rx="0"/>
<rect x="795.80" y="568.20" width="54.30" height="1.70" fill="#17d957" rx="0"/>
<rect x="795.80" y="569.90" width="54.30" height="0.80" fill="#ff7722" rx="0"/>
<rect x="795.80" y="570.70" width="54.30" height="9.90" fill="#eaa0ff" rx="0"/>
<rect x="795.80" y="580.60" width="54.30" height="3.90" fill="#ef4e4e" rx="0"/>
<rect x="795.80" y="584.50" width="54.30" height="2.10" fill="#9810d0" rx="0"/>
<rect x="822.45" y="586.60" width="1.00" height="3.00" fill="#dddddd" rx="0"/>
<text x="822.95" y="600.50" font-size="9.6" fill="#2d6757" color="#2d6757" text-anchor="middle">September</text>
<text x="822.95" y="609.90" font-size="9.8" fill="#2d6757" color="#2d6757" text-anchor="middle">2025</text>
<text x="596.60" y="640.80" font-size="11.4" fill="#2d6757" color="#2d6757" text-anchor="middle">Year-month</text>
<text x="898.50" y="434.90" font-size="9.8" fill="#111111" color="#111111" font-weight="bold" textLength="313.10" lengthAdjust="spacingAndGlyphs">Top 10 Trending Up Products By Revenue For Last 6 Months</text>
<rect x="913.00" y="455.80" width="6.80" height="6.90" fill="#2479ff" rx="0"/>
<text x="926.10" y="462.00" font-size="10.3" fill="#2d6757" color="#2d6757" textLength="86.10" lengthAdjust="spacingAndGlyphs">Dehydrated onion</text>
<rect x="1044.00" y="455.80" width="6.80" height="6.90" fill="#ffb68c" rx="0"/>
<text x="1056.30" y="462.00" font-size="10.3" fill="#2d6757" color="#2d6757" textLength="59.40" lengthAdjust="spacingAndGlyphs">Brown sugar</text>
<rect x="1148.60" y="455.80" width="6.80" height="6.90" fill="#1ec8ff" rx="0"/>
<text x="1161.00" y="462.00" font-size="10.3" fill="#2d6757" color="#2d6757" textLength="65.20" lengthAdjust="spacingAndGlyphs">Bread crumbs</text>
<rect x="1258.00" y="455.80" width="6.80" height="6.90" fill="#17d957" rx="0"/>
<text x="1271.00" y="462.00" font-size="10.3" fill="#2d6757" color="#2d6757" textLength="62.80" lengthAdjust="spacingAndGlyphs">Banana chips</text>
<rect x="913.00" y="475.70" width="6.80" height="6.90" fill="#ff7722" rx="0"/>
<text x="926.10" y="481.90" font-size="10.3" fill="#2d6757" color="#2d6757" textLength="70.30" lengthAdjust="spacingAndGlyphs">Coconut flakes</text>
<rect x="1028.20" y="475.70" width="6.80" height="6.90" fill="#1a9cc4" rx="0"/>
<text x="1041.00" y="481.90" font-size="10.3" fill="#2d6757" color="#2d6757" textLength="49.00" lengthAdjust="spacingAndGlyphs">Fettuccine</text>
<rect x="1122.50" y="475.70" width="6.80" height="6.90" fill="#eaa0ff" rx="0"/>
<text x="1134.80" y="481.90" font-size="10.3" fill="#2d6757" color="#2d6757" textLength="55.00" lengthAdjust="spacingAndGlyphs">Coconut oil</text>
<rect x="1222.40" y="475.70" width="6.80" height="6.90" fill="#ef4e4e" rx="0"/>
<text x="1235.50" y="481.90" font-size="10.3" fill="#2d6757" color="#2d6757" textLength="28.79" lengthAdjust="spacingAndGlyphs">Barley</text>
<path d="M1453.5,464.1 L1463.6,464.1 L1458.55,453.8 Z" fill="#8a8a8a"/>
<text x="1465.40" y="463.60" font-size="10" fill="#8a8a8a" color="#8a8a8a" textLength="13.10" lengthAdjust="spacingAndGlyphs">1/2</text>
<path d="M1479.6,453.8 L1489.7,453.8 L1484.65,464.1 Z" fill="#1a6ff0"/>
<rect x="958.10" y="507.30" width="543.90" height="1.00" fill="#e6e6e6" rx="0"/>
<rect x="958.10" y="533.60" width="543.90" height="1.00" fill="#e6e6e6" rx="0"/>
<rect x="958.10" y="559.80" width="543.90" height="1.00" fill="#e6e6e6" rx="0"/>
<rect x="958.10" y="586.10" width="543.90" height="1.00" fill="#e6e6e6" rx="0"/>
<text x="952.90" y="511.30" font-size="10" fill="#2d6757" color="#2d6757" text-anchor="end">1.5M</text>
<text x="952.90" y="537.60" font-size="10" fill="#2d6757" color="#2d6757" text-anchor="end">1M</text>
<text x="952.90" y="563.80" font-size="10" fill="#2d6757" color="#2d6757" text-anchor="end">500K</text>
<text x="952.90" y="590.10" font-size="10" fill="#2d6757" color="#2d6757" text-anchor="end">0</text>
<text transform="translate(906.70,548.00) rotate(-90)" x="0" y="0" font-size="11" fill="#2d6757" text-anchor="middle" dominant-baseline="central">Sales($)</text>
<rect x="976.25" y="539.30" width="54.30" height="1.70" fill="#2479ff" rx="0"/>
<rect x="976.25" y="541.00" width="54.30" height="28.80" fill="#ffb68c" rx="0"/>
<rect x="976.25" y="569.80" width="54.30" height="1.00" fill="#1ec8ff" rx="0"/>
<rect x="976.25" y="570.80" width="54.30" height="3.20" fill="#17d957" rx="0"/>
<rect x="976.25" y="574.00" width="54.30" height="8.40" fill="#ff7722" rx="0"/>
<rect x="976.25" y="582.40" width="54.30" height="1.50" fill="#1a9cc4" rx="0"/>
<rect x="976.25" y="583.90" width="54.30" height="2.70" fill="#eaa0ff" rx="0"/>
<rect x="1002.90" y="586.60" width="1.00" height="3.00" fill="#dddddd" rx="0"/>
<text x="1003.40" y="600.50" font-size="9.6" fill="#2d6757" color="#2d6757" text-anchor="middle">April</text>
<text x="1003.40" y="609.90" font-size="9.8" fill="#2d6757" color="#2d6757" text-anchor="middle">2025</text>
<rect x="1066.90" y="535.80" width="54.30" height="4.60" fill="#2479ff" rx="0"/>
<rect x="1066.90" y="540.40" width="54.30" height="30.40" fill="#ffb68c" rx="0"/>
<rect x="1066.90" y="570.80" width="54.30" height="1.20" fill="#1ec8ff" rx="0"/>
<rect x="1066.90" y="572.00" width="54.30" height="2.00" fill="#17d957" rx="0"/>
<rect x="1066.90" y="574.00" width="54.30" height="8.40" fill="#ff7722" rx="0"/>
<rect x="1066.90" y="582.40" width="54.30" height="1.50" fill="#1a9cc4" rx="0"/>
<rect x="1066.90" y="583.90" width="54.30" height="2.70" fill="#eaa0ff" rx="0"/>
<rect x="1093.55" y="586.60" width="1.00" height="3.00" fill="#dddddd" rx="0"/>
<text x="1094.05" y="600.50" font-size="9.6" fill="#2d6757" color="#2d6757" text-anchor="middle">May</text>
<text x="1094.05" y="609.90" font-size="9.8" fill="#2d6757" color="#2d6757" text-anchor="middle">2025</text>
<rect x="1157.55" y="532.40" width="54.30" height="9.40" fill="#2479ff" rx="0"/>
<rect x="1157.55" y="541.80" width="54.30" height="27.00" fill="#ffb68c" rx="0"/>
<rect x="1157.55" y="568.80" width="54.30" height="0.90" fill="#1ec8ff" rx="0"/>
<rect x="1157.55" y="569.70" width="54.30" height="3.20" fill="#17d957" rx="0"/>
<rect x="1157.55" y="572.90" width="54.30" height="9.40" fill="#ff7722" rx="0"/>
<rect x="1157.55" y="582.30" width="54.30" height="1.80" fill="#1a9cc4" rx="0"/>
<rect x="1157.55" y="584.10" width="54.30" height="2.50" fill="#eaa0ff" rx="0"/>
<rect x="1184.20" y="586.60" width="1.00" height="3.00" fill="#dddddd" rx="0"/>
<text x="1184.70" y="600.50" font-size="9.6" fill="#2d6757" color="#2d6757" text-anchor="middle">June</text>
<text x="1184.70" y="609.90" font-size="9.8" fill="#2d6757" color="#2d6757" text-anchor="middle">2025</text>
<rect x="1248.20" y="513.90" width="54.30" height="19.10" fill="#2479ff" rx="0"/>
<rect x="1248.20" y="533.00" width="54.30" height="36.40" fill="#ffb68c" rx="0"/>
<rect x="1248.20" y="569.40" width="54.30" height="1.70" fill="#1ec8ff" rx="0"/>
<rect x="1248.20" y="571.10" width="54.30" height="3.80" fill="#17d957" rx="0"/>
<rect x="1248.20" y="574.90" width="54.30" height="7.10" fill="#ff7722" rx="0"/>
<rect x="1248.20" y="582.00" width="54.30" height="1.90" fill="#1a9cc4" rx="0"/>
<rect x="1248.20" y="583.90" width="54.30" height="2.70" fill="#eaa0ff" rx="0"/>
<rect x="1274.85" y="586.60" width="1.00" height="3.00" fill="#dddddd" rx="0"/>
<text x="1275.35" y="600.50" font-size="9.6" fill="#2d6757" color="#2d6757" text-anchor="middle">July</text>
<text x="1275.35" y="609.90" font-size="9.8" fill="#2d6757" color="#2d6757" text-anchor="middle">2025</text>
<rect x="1338.85" y="513.50" width="54.30" height="18.40" fill="#2479ff" rx="0"/>
<rect x="1338.85" y="531.90" width="54.30" height="33.30" fill="#ffb68c" rx="0"/>
<rect x="1338.85" y="565.20" width="54.30" height="1.40" fill="#1ec8ff" rx="0"/>
<rect x="1338.85" y="566.60" width="54.30" height="3.90" fill="#17d957" rx="0"/>
<rect x="1338.85" y="570.50" width="54.30" height="9.70" fill="#ff7722" rx="0"/>
<rect x="1338.85" y="580.20" width="54.30" height="1.90" fill="#1a9cc4" rx="0"/>
<rect x="1338.85" y="582.10" width="54.30" height="4.50" fill="#eaa0ff" rx="0"/>
<rect x="1365.50" y="586.60" width="1.00" height="3.00" fill="#dddddd" rx="0"/>
<text x="1366.00" y="600.50" font-size="9.6" fill="#2d6757" color="#2d6757" text-anchor="middle">August</text>
<text x="1366.00" y="609.90" font-size="9.8" fill="#2d6757" color="#2d6757" text-anchor="middle">2025</text>
<rect x="1429.50" y="516.80" width="54.30" height="19.80" fill="#2479ff" rx="0"/>
<rect x="1429.50" y="536.60" width="54.30" height="32.20" fill="#ffb68c" rx="0"/>
<rect x="1429.50" y="568.80" width="54.30" height="1.70" fill="#1ec8ff" rx="0"/>
<rect x="1429.50" y="570.50" width="54.30" height="3.20" fill="#17d957" rx="0"/>
<rect x="1429.50" y="573.70" width="54.30" height="8.30" fill="#ff7722" rx="0"/>
<rect x="1429.50" y="582.00" width="54.30" height="1.50" fill="#1a9cc4" rx="0"/>
<rect x="1429.50" y="583.50" width="54.30" height="3.10" fill="#eaa0ff" rx="0"/>
<rect x="1456.15" y="586.60" width="1.00" height="3.00" fill="#dddddd" rx="0"/>
<text x="1456.65" y="600.50" font-size="9.6" fill="#2d6757" color="#2d6757" text-anchor="middle">September</text>
<text x="1456.65" y="609.90" font-size="9.8" fill="#2d6757" color="#2d6757" text-anchor="middle">2025</text>
<text x="1230.00" y="640.80" font-size="11.4" fill="#2d6757" color="#2d6757" text-anchor="middle">Year-month</text>
<path d="M243.5,396.3 C251,396.8 254.6,401 254.6,408 L254.6,419 C254.6,426 251,430 243.5,430.4" fill="#ffffff" stroke="#d8d8d8" stroke-width="1"/>
<rect x="243.00" y="397.00" width="1.20" height="33.00" fill="#ffffff" rx="0"/>
<path d="M249.1,409.9 L249.1,418.3 L242.5,414.1 Z" fill="#1a6ff0"/>
<rect x="1524.80" y="127.00" width="4.40" height="571.50" fill="#c6c6c6" rx="2"/>
<rect x="1524.80" y="127.00" width="0.80" height="571.50" fill="#dcdcdc" rx="0"/>
<rect x="1524.80" y="216.00" width="4.40" height="208.00" fill="#888888" rx="2"/>
<rect x="1511.9" y="457" width="20" height="79.5" rx="4" fill="#ffffff" stroke="#7a9af2" stroke-width="1"/>
<text transform="translate(1521.6,497) rotate(90)" x="0" y="0" font-size="9.9" fill="#7f95f0" text-anchor="middle" dominant-baseline="central" letter-spacing="2.0">Feedback</text>
<defs><radialGradient id="sh" cx="0.5" cy="0.5" r="0.5"><stop offset="0.5" stop-color="#000" stop-opacity="0.04"/><stop offset="1" stop-color="#000" stop-opacity="0"/></radialGradient></defs>
<linearGradient id="shb" x1="0" y1="0" x2="0" y2="1"><stop offset="0" stop-color="#f4f4f4" stop-opacity="0"/><stop offset="1" stop-color="#f3f3f3"/></linearGradient>
<rect x="1425.00" y="693.00" width="69.00" height="64.00" fill="url(#shb)" rx="0"/>
<rect x="1407.00" y="757.00" width="118.00" height="5.00" fill="#f5f5f5" rx="0"/>
<ellipse cx="1459" cy="731" rx="40" ry="36" fill="url(#sh)"/>
<rect x="1494.20" y="698.50" width="34.80" height="58.10" fill="#ffffff" rx="0"/>
<rect x="1483.00" y="723.00" width="11.50" height="15.60" fill="#ffffff" rx="0"/>
<circle cx="1458.8" cy="719.5" r="23.8" fill="#ffffff" stroke="#e4e4e4" stroke-width="2.8"/>
<path d="M1453.2,704.8 C1446,704.2 1443.2,713 1449.7,716.4 Z" fill="#0840e8"/>
<path d="M1462,707.6 C1455,706.8 1452.2,715.5 1458.3,719 Z" fill="#0840e8"/>
<path d="M1454.4,725.6 L1468.9,719.8 C1470.5,727 1464.5,731.5 1459.5,730 C1457,729.4 1455.3,727.6 1454.4,725.6 Z" fill="#4a8ce8"/>
<path d="M1525,756.6 L1529,756.6 L1527,760.5 Z" fill="#9a9a9a"/>
<rect x="1524.80" y="757.00" width="4.20" height="5.00" fill="#c8c8c8" rx="0"/>
</svg>
</body></html>
